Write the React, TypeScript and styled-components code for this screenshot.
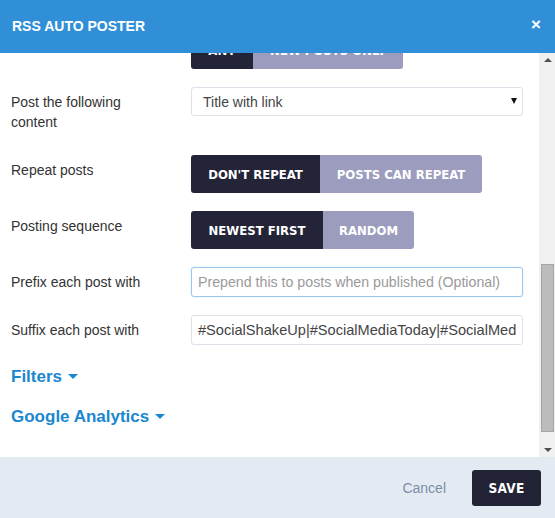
import React, { useLayoutEffect, useRef } from 'react';
import styled, { createGlobalStyle } from 'styled-components';

const GlobalStyle = createGlobalStyle`
  html, body {
    margin: 0;
    padding: 0;
    background: #ffffff;
  }
  body {
    font-family: 'Liberation Sans', Arial, sans-serif;
  }
  * {
    box-sizing: border-box;
  }
`;

const Modal = styled.div`
  width: 555px;
  height: 518px;
  display: flex;
  flex-direction: column;
  background: #ffffff;
`;

const Header = styled.div`
  height: 53px;
  flex: none;
  background-color: #318fd8;
  display: flex;
  align-items: center;
  justify-content: space-between;
  padding: 0 14px 2px 12px;
`;

const Title = styled.div`
  color: #ffffff;
  font-size: 14px;
  font-weight: bold;
`;

const Close = styled.div`
  color: #ffffff;
  font-size: 17px;
  font-weight: bold;
  line-height: 1;
  margin-top: -3px;
`;

const Body = styled.div`
  flex: 1;
  min-height: 0;
  display: flex;
`;

const ScrollArea = styled.div`
  flex: 1;
  overflow: hidden;
`;

const ScrollBar = styled.div`
  width: 16px;
  flex: none;
  background-color: #f0f0f0;
  display: flex;
  flex-direction: column;
`;

const ScrollArrow = styled.div<{ $up?: boolean }>`
  height: 17px;
  flex: none;
  display: flex;
  align-items: center;
  justify-content: center;

  &::before {
    content: '';
    width: 0;
    height: 0;
    border-left: 4px solid transparent;
    border-right: 4px solid transparent;
    ${(p) => (p.$up ? 'border-bottom: 4px solid #505050;' : 'border-top: 4px solid #505050;')}
    margin-left: 1px;
    margin-top: ${(p) => (p.$up ? '-3px' : '2px')};
  }
`;

const ScrollTrack = styled.div`
  flex: 1;
  padding: 194px 1px 0 2px;
`;

const ScrollThumb = styled.div`
  height: 168px;
  background-color: #bcbcbc;
  border: 1px solid #a4a4a4;
`;

const Content = styled.div`
  padding: 28px 16px 12px 11px;
`;

const Row = styled.div`
  display: grid;
  grid-template-columns: 150px 1fr;
  column-gap: 30px;
  margin-bottom: 18px;
`;

const Label = styled.div`
  padding: 5px 0;
  font-size: 14px;
  line-height: 20px;
  color: #333333;
`;

const SelectWrap = styled.div`
  position: relative;

  &::after {
    content: '';
    position: absolute;
    right: 6px;
    top: 11px;
    border-left: 3.5px solid transparent;
    border-right: 3.5px solid transparent;
    border-top: 6px solid #111111;
    pointer-events: none;
  }
`;

const Select = styled.select`
  appearance: none;
  width: 100%;
  height: 29px;
  border: 1px solid #dbe2ea;
  border-radius: 3px;
  background: #ffffff;
  padding: 0 24px 0 11px;
  font-family: 'Liberation Sans', Arial, sans-serif;
  font-size: 14px;
  color: #444444;
  outline: none;
`;

const Input = styled.input<{ $focused?: boolean }>`
  width: 100%;
  height: 30px;
  border: 1px solid ${(p) => (p.$focused ? '#9cc8ef' : '#dbe2ea')};
  border-radius: 3px;
  padding: 0 6px;
  font-family: 'Liberation Sans', Arial, sans-serif;
  font-size: 14.6px;
  color: #444444;
  outline: none;
  box-shadow: ${(p) => (p.$focused ? '0 0 2px rgba(80, 150, 220, 0.25)' : 'none')};

  &::placeholder {
    color: #9a9a9a;
    font-size: 14.2px;
  }
`;

const Toggle = styled.div`
  display: inline-flex;
  justify-self: start;
  border-radius: 3px;
  overflow: hidden;
`;

const ToggleButton = styled.div<{ $active?: boolean; $width: number }>`
  width: ${(p) => p.$width}px;
  height: 38px;
  display: flex;
  align-items: center;
  justify-content: center;
  background-color: ${(p) => (p.$active ? '#242438' : '#9b9cbe')};
  color: #ffffff;
  font-family: 'DejaVu Sans Condensed', 'DejaVu Sans', sans-serif;
  font-weight: bold;
  font-size: 13px;
  letter-spacing: 0;
`;

const Sections = styled.div`
  padding-top: 2px;
`;

const SectionLink = styled.div`
  display: flex;
  align-items: center;
  gap: 6px;
  font-size: 17px;
  font-weight: bold;
  line-height: 24px;
  color: #1a87d0;
  margin-bottom: 16px;
`;

const Caret = styled.span`
  width: 0;
  height: 0;
  border-left: 5px solid transparent;
  border-right: 5px solid transparent;
  border-top: 5px solid #1a87d0;
  margin-top: -2px;
`;

const Footer = styled.div`
  height: 61px;
  flex: none;
  background-color: #e4eaf1;
  display: flex;
  align-items: center;
  justify-content: flex-end;
  gap: 26px;
  padding: 1px 14px 0 0;
`;

const CancelButton = styled.div`
  font-size: 14px;
  color: #7d8ea8;
`;

const SaveButton = styled.div`
  width: 69px;
  height: 36px;
  border-radius: 3px;
  background-color: #232336;
  color: #ffffff;
  display: flex;
  align-items: center;
  justify-content: center;
  font-family: 'DejaVu Sans Condensed', 'DejaVu Sans', sans-serif;
  font-weight: bold;
  font-size: 13.5px;
  letter-spacing: 0.3px;
`;

const App: React.FunctionComponent = () => {
  const scrollRef = useRef<HTMLDivElement>(null);

  useLayoutEffect(() => {
    if (scrollRef.current) {
      scrollRef.current.scrollTop = scrollRef.current.scrollHeight;
    }
  }, []);

  return (
    <>
      <GlobalStyle />
      <Modal>
        <Header>
          <Title>RSS AUTO POSTER</Title>
          <Close>×</Close>
        </Header>
        <Body>
          <ScrollArea ref={scrollRef}>
            <Content>
              <Row>
                <Label>Feed URL</Label>
                <Input defaultValue="http://www.socialmediatoday.com/rss.xml" />
              </Row>
              <Row>
                <Label>Post to</Label>
                <SelectWrap>
                  <Select defaultValue="all">
                    <option value="all">All connected accounts</option>
                  </Select>
                </SelectWrap>
              </Row>
              <Row>
                <Label>Check feed every</Label>
                <SelectWrap>
                  <Select defaultValue="1h">
                    <option value="1h">1 hour</option>
                  </Select>
                </SelectWrap>
              </Row>
              <Row>
                <Label>Start posting at</Label>
                <Input defaultValue="09:00" />
              </Row>
              <Row>
                <Label>Include images</Label>
                <Toggle>
                  <ToggleButton $active $width={62}>YES</ToggleButton>
                  <ToggleButton $width={62}>NO</ToggleButton>
                </Toggle>
              </Row>
              <Row>
                <Label>Shorten links</Label>
                <Toggle>
                  <ToggleButton $active $width={62}>YES</ToggleButton>
                  <ToggleButton $width={62}>NO</ToggleButton>
                </Toggle>
              </Row>
              <Row>
                <Label>Max posts per day</Label>
                <Input defaultValue="5" />
              </Row>
              <Row>
                <Label>Posts to include</Label>
                <Toggle>
                  <ToggleButton $active $width={62}>ANY</ToggleButton>
                  <ToggleButton $width={150}>NEW POSTS ONLY</ToggleButton>
                </Toggle>
              </Row>
              <Row>
                <Label>Post the following content</Label>
                <SelectWrap>
                  <Select defaultValue="title-link">
                    <option value="title-link">Title with link</option>
                  </Select>
                </SelectWrap>
              </Row>
              <Row>
                <Label>Repeat posts</Label>
                <Toggle>
                  <ToggleButton $active $width={129}>DON'T REPEAT</ToggleButton>
                  <ToggleButton $width={162}>POSTS CAN REPEAT</ToggleButton>
                </Toggle>
              </Row>
              <Row>
                <Label>Posting sequence</Label>
                <Toggle>
                  <ToggleButton $active $width={132}>NEWEST FIRST</ToggleButton>
                  <ToggleButton $width={91}>RANDOM</ToggleButton>
                </Toggle>
              </Row>
              <Row>
                <Label>Prefix each post with</Label>
                <Input $focused placeholder="Prepend this to posts when published (Optional)" />
              </Row>
              <Row>
                <Label>Suffix each post with</Label>
                <Input defaultValue="#SocialShakeUp|#SocialMediaToday|#SocialMedia|#Marketing" />
              </Row>
              <Sections>
                <SectionLink>
                  Filters
                  <Caret />
                </SectionLink>
                <SectionLink>
                  Google Analytics
                  <Caret />
                </SectionLink>
              </Sections>
            </Content>
          </ScrollArea>
          <ScrollBar>
            <ScrollArrow $up />
            <ScrollTrack>
              <ScrollThumb />
            </ScrollTrack>
            <ScrollArrow />
          </ScrollBar>
        </Body>
        <Footer>
          <CancelButton>Cancel</CancelButton>
          <SaveButton>SAVE</SaveButton>
        </Footer>
      </Modal>
    </>
  );
};

export default App;
